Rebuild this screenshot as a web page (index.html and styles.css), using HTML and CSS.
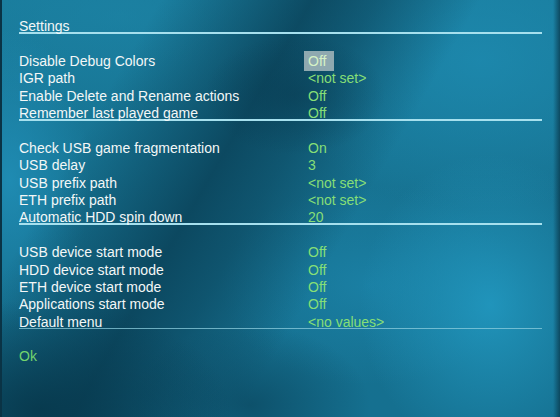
FILE: index.html
```html
<!DOCTYPE html>
<html>
<head>
<meta charset="utf-8">
<title>Settings</title>
<link rel="stylesheet" href="styles.css">
</head>
<body>
<div class="screen">
  <div class="group title-group">
    <div class="row"><span class="label">Settings</span></div>
  </div>

  <div class="group">
    <div class="row"><span class="label">Disable Debug Colors</span><span class="value"><span class="selected">Off</span></span></div>
    <div class="row"><span class="label">IGR path</span><span class="value">&lt;not set&gt;</span></div>
    <div class="row"><span class="label">Enable Delete and Rename actions</span><span class="value">Off</span></div>
    <div class="row"><span class="label">Remember last played game</span><span class="value">Off</span></div>
  </div>

  <div class="group">
    <div class="row"><span class="label">Check USB game fragmentation</span><span class="value">On</span></div>
    <div class="row"><span class="label">USB delay</span><span class="value">3</span></div>
    <div class="row"><span class="label">USB prefix path</span><span class="value">&lt;not set&gt;</span></div>
    <div class="row"><span class="label">ETH prefix path</span><span class="value">&lt;not set&gt;</span></div>
    <div class="row"><span class="label">Automatic HDD spin down</span><span class="value">20</span></div>
  </div>

  <div class="group thin">
    <div class="row"><span class="label">USB device start mode</span><span class="value">Off</span></div>
    <div class="row"><span class="label">HDD device start mode</span><span class="value">Off</span></div>
    <div class="row"><span class="label">ETH device start mode</span><span class="value">Off</span></div>
    <div class="row"><span class="label">Applications start mode</span><span class="value">Off</span></div>
    <div class="row"><span class="label">Default menu</span><span class="value">&lt;no values&gt;</span></div>
  </div>

  <div class="row ok-row"><span class="ok">Ok</span></div>
</div>
</body>
</html>
```

FILE: styles.css
```css
html, body {
  margin: 0;
  padding: 0;
  width: 560px;
  height: 417px;
  overflow: hidden;
}

body {
  font-family: "Liberation Sans", Arial, sans-serif;
  font-size: 14px;
}

.screen {
  box-sizing: border-box;
  width: 560px;
  height: 417px;
  padding: 18px 18px 0 19px;
  background-color: #187896;
  background-image:
    linear-gradient(90deg, #0a3345 0, #0a3345 2px, rgba(10,51,69,0) 2px),
    linear-gradient(270deg, rgba(10,60,80,0.8) 0, rgba(10,60,80,0) 7px),
    radial-gradient(ellipse 90px 60px at 295px 95px, rgba(8,58,80,0.55), rgba(8,58,80,0)),
    radial-gradient(ellipse 190px 110px at 40px 410px, rgba(7,56,76,0.9), rgba(7,56,76,0)),
    radial-gradient(ellipse 120px 80px at 250px 405px, rgba(8,60,82,0.6), rgba(8,60,82,0)),
    linear-gradient(120deg, rgba(9,62,84,0) 20%, rgba(9,62,84,0.8) 39%, rgba(9,62,84,0.55) 47%, rgba(9,62,84,0) 60%),
    radial-gradient(ellipse 130px 150px at 490px 305px, rgba(34,154,194,0.85), rgba(34,154,194,0)),
    radial-gradient(ellipse 150px 100px at 370px 285px, rgba(30,140,180,0.55), rgba(30,140,180,0)),
    radial-gradient(ellipse 210px 150px at 480px 60px, rgba(30,140,178,0.75), rgba(30,140,178,0)),
    radial-gradient(ellipse 80px 150px at 10px 180px, rgba(33,145,186,0.8), rgba(33,145,186,0)),
    radial-gradient(ellipse 220px 100px at 120px 15px, rgba(29,132,166,0.6), rgba(29,132,166,0)),
    linear-gradient(180deg, #197b9b 0%, #16708f 60%, #157090 100%);
}

.group {
  border-bottom: 2px solid #a6e0ee;
  margin-bottom: 18.8px;
}

.group.thin {
  border-bottom: 1px solid rgba(140, 205, 222, 0.75);
  margin-bottom: 19.8px;
}

.row {
  display: grid;
  grid-template-columns: 289px auto;
  height: 17.4px;
  line-height: 17.4px;
  white-space: nowrap;
}

.group .row:last-child {
  margin-bottom: -3.4px;
}

.label {
  color: #f3f7f7;
}

.value {
  color: #86df76;
}

.selected {
  background: #8fa9b0;
  color: #d6f2c6;
  padding: 2px 8px 2px 4px;
  margin-left: -4px;
}

.ok {
  color: #72d46e;
}
```
